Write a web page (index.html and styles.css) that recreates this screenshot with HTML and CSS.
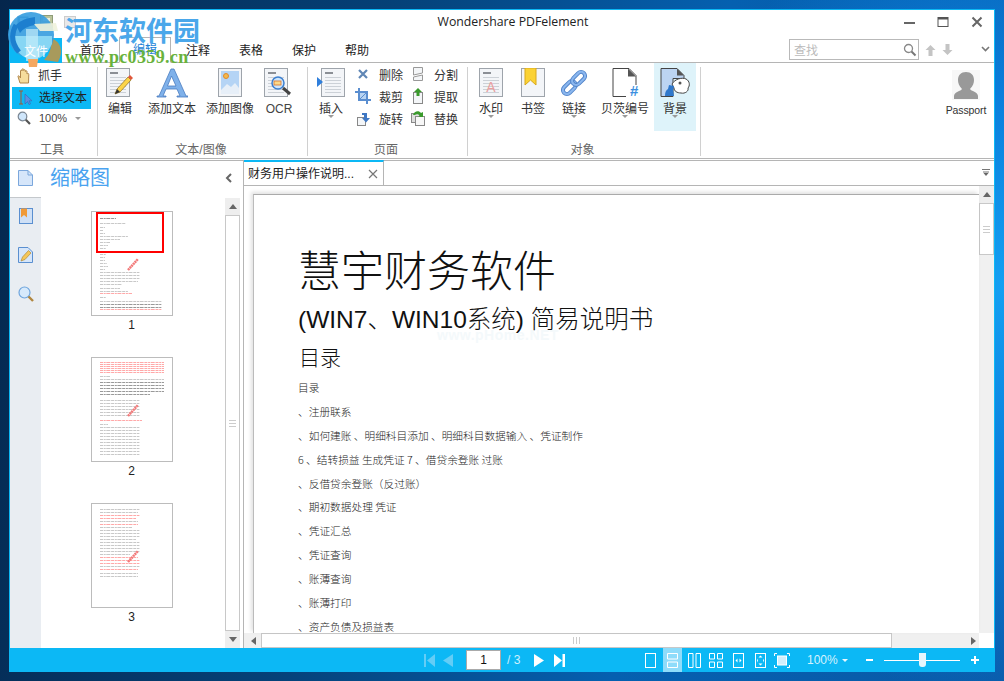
FILE: index.html
```html
<!DOCTYPE html>
<html lang="zh">
<head>
<meta charset="utf-8">
<title>Wondershare PDFelement</title>
<link rel="stylesheet" href="styles.css">
</head>
<body>
<svg class="defs" width="0" height="0">
  <defs>
    <symbol id="paper" viewBox="0 0 26 30">
      <rect x=".5" y=".5" width="23" height="28" fill="#f3f5f8" stroke="#9ea4ab"/>
      <rect x="4" y="4" width="8" height="2" fill="#8b8f95"/>
      <path d="M4 9.500h16M4 12.500h16M4 15.500h16M4 18.500h16M4 21.500h16M4 24.500h16" stroke="#ccd1d7"/>
    </symbol>
  </defs>
</svg>
<div class="window">
  <header class="titlebar">
    <div class="qat">
      <svg width="12" height="12" viewBox="0 0 12 12"><rect x="1" y="1" width="10" height="10" fill="#2d78c4" stroke="#1d5a9c"/><rect x="3" y="2" width="6" height="3" fill="#cfe6fb"/></svg>
      <svg width="13" height="13" viewBox="0 0 13 13"><rect x=".5" y=".5" width="12" height="12" fill="#b9c39a" stroke="#8e9c78"/><rect x="3" y="3" width="7" height="3" fill="#e8ecd8"/></svg>
      <svg width="12" height="12" viewBox="0 0 12 12"><rect x=".5" y=".5" width="11" height="11" fill="#e9e9e9" stroke="#ccc"/></svg>
    </div>
    <div class="app-title">Wondershare PDFelement</div>
    <div class="winctl">
      <svg width="12" height="12" viewBox="0 0 12 12"><path d="M1 7h11" stroke="#666" stroke-width="2"/></svg>
      <svg width="12" height="12" viewBox="0 0 12 12"><rect x="1" y="1.500" width="10" height="9" fill="none" stroke="#555"/><path d="M1 2.500h10" stroke="#555" stroke-width="2"/></svg>
      <svg width="12" height="12" viewBox="0 0 12 12"><path d="M1.500 1.500l9 9M10.500 1.500l-9 9" stroke="#666" stroke-width="2"/></svg>
    </div>
  </header>
  <nav class="tabsrow">
    <div class="file-tab"><span>文件</span></div>
    <div class="menu first">首页</div>
    <div class="menu active">编辑</div>
    <div class="menu">注释</div>
    <div class="menu">表格</div>
    <div class="menu">保护</div>
    <div class="menu">帮助</div>
    <div class="searchbox">
      <span>查找</span>
      <svg width="14" height="14" viewBox="0 0 14 14"><circle cx="5.500" cy="5.500" r="4" fill="#fff" stroke="#888" stroke-width="1.300"/><path d="M8.500 8.500l4 4" stroke="#777" stroke-width="2"/></svg>
    </div>
    <svg class="sarrow" width="11" height="12" viewBox="0 0 11 12"><path d="M5.500 1L10.500 6H7.500V12H3.500V6H.5z" fill="#c4c4c4"/></svg>
    <svg class="sarrow" width="11" height="12" viewBox="0 0 11 12"><path d="M5.500 11L10.500 6H7.500V0H3.500V6H.5z" fill="#c4c4c4"/></svg>
    <svg class="chev" width="9" height="6" viewBox="0 0 9 6"><path d="M1 1l3.500 3.500L8 1" fill="none" stroke="#777" stroke-width="1.600"/></svg>
  </nav>

  <section class="ribbon">
    <div class="group g-tools">
      <div class="group-body toolcol">
        <div class="tool">
          <svg width="15" height="16" viewBox="0 0 15 16"><path d="M3 15L1 8.500c0-1 1-1 1.500 0L3.500 10V3c0-1.200 1.500-1.200 1.500 0V1.500c0-1 1.700-1 1.700 0V2.500c0-1 1.700-1 1.700 0V3.500c0-1 1.600-1 1.600 0V6c1-1 2-.5 1.800.5L11.500 15z" fill="#f6dc9c" stroke="#b1864a"/></svg>
          <span>抓手</span>
        </div>
        <div class="tool selected">
          <svg width="16" height="16" viewBox="0 0 16 16"><path d="M2 1h4M2 14h4M4 1v13" stroke="#a5582f" fill="none"/><path d="M8 4v10l2.500-2.500 1.500 3 1.500-.7-1.500-3H15z" fill="#5a8fe0" stroke="#3566b5" stroke-width=".6"/></svg>
          <span>选择文本</span>
        </div>
        <div class="tool zoomtool">
          <svg width="14" height="14" viewBox="0 0 14 14"><circle cx="5.500" cy="5.500" r="4.300" fill="#cfe6fb" stroke="#7b8794" stroke-width="1.200"/><path d="M8.800 8.800l4.200 4.200" stroke="#555" stroke-width="2.200"/></svg>
          <span class="pct">100%</span>
          <i class="caret"></i>
        </div>
      </div>
      <div class="group-label">工具</div>
    </div>

    <div class="group g-text">
      <div class="group-body">
        <div class="big w44">
          <svg class="ico" width="32" height="30" viewBox="0 0 32 30"><use href="#paper" width="26" height="30" x="2"/><path d="M11 26l2-5L24 9l3 3-11 12z" fill="#fbd44a" stroke="#8a6a1c" stroke-width=".7"/><path d="M24 9l2-2 3 3-2 2z" fill="#e0563a"/><path d="M11 26l2-5 3 3z" fill="#333"/></svg>
          <span>编辑</span>
        </div>
        <div class="big w60">
          <svg class="ico" width="32" height="30" viewBox="0 0 32 30"><path d="M16 1h-1L3 28h-2v1h9v-1H7l3-7h11l3 7h-3v1h11v-1h-2L18 1zM11.500 18L15.500 8l4.500 10z" fill="#7fb1ea" stroke="#4a7cc0" stroke-width=".8"/></svg>
          <span>添加文本</span>
        </div>
        <div class="big w56">
          <svg class="ico" width="32" height="30" viewBox="0 0 32 30"><rect x="4.500" y=".5" width="23" height="28" fill="#f3f5f8" stroke="#9ea4ab"/><rect x="7" y="3" width="18" height="23" fill="#b5d4f5"/><circle cx="12" cy="8" r="2.500" fill="#f5b94d" stroke="#e08a2c"/><path d="M7 22l6-6 4 3 4-4 4 5v6H7z" fill="#e7eff8"/></svg>
          <span>添加图像</span>
        </div>
        <div class="big w42">
          <svg class="ico" width="32" height="30" viewBox="0 0 32 30"><use href="#paper" width="26" height="30" x="1"/><circle cx="15" cy="15" r="6" fill="#cfe6fb" stroke="#3c7fd0" stroke-width="1.500"/><rect x="11" y="13" width="7" height="4" fill="#fbd98a" stroke="#d8722c" stroke-width=".8"/><path d="M20 20l7 6" stroke="#444" stroke-width="3"/></svg>
          <span class="lat">OCR</span>
        </div>
      </div>
      <div class="group-label">文本/图像</div>
    </div>

    <div class="group g-page">
      <div class="group-body">
        <div class="big w46 has-caret">
          <svg class="ico" width="32" height="30" viewBox="0 0 32 30"><use href="#paper" width="26" height="30" x="6"/><path d="M2 9l6 5-6 5z" fill="#2f7fdc"/></svg>
          <span>插入</span>
          <i class="caret"></i>
        </div>
        <div class="smallgrid">
          <div class="small"><svg width="16" height="14" viewBox="0 0 16 14"><path d="M4 3l8 8M12 3l-8 8" stroke="#5f86b5" stroke-width="2.200"/></svg><span>删除</span></div>
          <div class="small"><svg width="16" height="14" viewBox="0 0 16 14"><path d="M3.500.5h9v5.500l-9 2zM3.500 10l9-2v5.500h-9z" fill="#f4f6f8" stroke="#999"/></svg><span>分割</span></div>
          <div class="small"><svg width="16" height="16" viewBox="0 0 16 16"><path d="M4 0v12h12M0 4h12v12" fill="none" stroke="#5a8ed0" stroke-width="2"/><rect x="5" y="5" width="6" height="6" fill="#b7d3f2"/><path d="M5 11l6-6" stroke="#5a8ed0"/></svg><span>裁剪</span></div>
          <div class="small"><svg width="16" height="16" viewBox="0 0 16 16"><rect x="3.500" y="4.500" width="9" height="11" fill="#f4f6f8" stroke="#888"/><path d="M8 0l4 4H9.500v4h-3V4H4z" fill="#3a9a2c"/></svg><span>提取</span></div>
          <div class="small"><svg width="16" height="15" viewBox="0 0 16 15"><rect x="2.500" y="6.500" width="8" height="8" fill="#f4f6f8" stroke="#888"/><path d="M7 2h5v5h3l-4 4.500L7 7h2V4H7z" fill="#3f78c4"/></svg><span>旋转</span></div>
          <div class="small"><svg width="16" height="16" viewBox="0 0 16 16"><rect x="1.500" y="3.500" width="8" height="9" fill="#ddd" stroke="#888"/><rect x="5.500" y="6.500" width="9" height="9" fill="#f7f7f7" stroke="#888"/><path d="M3 5c1-4 6-5 8-2l2-1v5H8l2-1c-1-2-4-2-5-1z" fill="#3a9a2c"/></svg><span>替换</span></div>
        </div>
      </div>
      <div class="group-label">页面</div>
    </div>

    <div class="group g-object">
      <div class="group-body">
        <div class="big w46 has-caret">
          <svg class="ico" width="32" height="30" viewBox="0 0 32 30"><use href="#paper" width="26" height="30" x="4"/><text class="wm" x="16" y="24">A</text></svg>
          <span>水印</span>
          <i class="caret"></i>
        </div>
        <div class="big w38">
          <svg class="ico" width="32" height="30" viewBox="0 0 32 30"><rect x="4.500" y=".5" width="23" height="28" fill="#f3f5f8" stroke="#9ea4ab"/><path d="M8 0h11v17l-5.500-5L8 17z" fill="#fbd234" stroke="#d8a81c"/></svg>
          <span>书签</span>
        </div>
        <div class="big w44 has-caret">
          <svg class="ico" width="32" height="30" viewBox="0 0 32 30"><g transform="rotate(-45 16 15)" fill="none"><rect x="2" y="11" width="15" height="8" rx="4" stroke="#4f82c8" stroke-width="4"/><rect x="2" y="11" width="15" height="8" rx="4" stroke="#8ab6ee" stroke-width="2.200"/><rect x="15" y="11" width="15" height="8" rx="4" stroke="#4f82c8" stroke-width="4"/><rect x="15" y="11" width="15" height="8" rx="4" stroke="#8ab6ee" stroke-width="2.200"/></g></svg>
          <span>链接</span>
          <i class="caret"></i>
        </div>
        <div class="big w58 has-caret">
          <svg class="ico" width="32" height="30" viewBox="0 0 32 30"><path d="M4 28.500V.5h16l7 7V17M4 28.500h13" fill="#fff" stroke="#444"/><path d="M19 .5l8 8h-8z" fill="#555"/><text class="hash" x="21" y="28">#</text></svg>
          <span>贝茨编号</span>
          <i class="caret"></i>
        </div>
        <div class="big w42 has-caret on">
          <svg class="ico" width="32" height="30" viewBox="0 0 32 30"><path d="M2 28.500V.5h16l7 7v3H14v18z" fill="#bcd4f2" stroke="#444"/><path d="M18 .5l7 7h-7z" fill="#555"/><path d="M13 16c3-5 10-7 14-5 4 2 4 7 2 9 1 3-3 6-7 5-4 0-7-2-7-5z" fill="#fff" stroke="#444"/><circle cx="21" cy="15" r="1.500" fill="#555"/><path d="M6 28c0-4 1-6 3-7l1-4 5 1-1 4 1 6z" fill="#2f78cc"/></svg>
          <span>背景</span>
          <i class="caret"></i>
        </div>
      </div>
      <div class="group-label">对象</div>
    </div>

    <div class="passport">
      <svg width="28" height="30" viewBox="0 0 28 30"><rect width="28" height="30" fill="#f7f7f7"/><path d="M2 29v-3c0-4 7-5 8-7-3-3-4-6-4-9 0-5 3-8 8-8s8 3 8 8c0 3-1 6-4 9 1 2 8 3 8 7v3z" fill="#999"/></svg>
      <span>Passport</span>
    </div>
  </section>

  <main class="workspace">
    <aside class="rail">
      <div class="rail-top">
        <svg width="15" height="16" viewBox="0 0 15 16"><path d="M.5.500h9.500l4.500 4.500v10.500H.5z" fill="#d6e6fa" stroke="#7ba7dc"/><path d="M10 .5v4.500h4.500" fill="none" stroke="#7ba7dc"/></svg>
      </div>
      <div class="rail-item">
        <svg width="14" height="16" viewBox="0 0 14 16"><rect x=".5" y=".5" width="13" height="15" fill="#cfe0f6" stroke="#5a8fd0"/><path d="M2 .5h6v9L5 7l-3 2.500z" fill="#f09a38"/></svg>
      </div>
      <div class="rail-item">
        <svg width="15" height="16" viewBox="0 0 15 16"><path d="M.5.500h9.500l4.500 4.500v10.500H.5z" fill="#d6e6fa" stroke="#5a8fd0"/><path d="M3 14l1.500-4 6-6.500 2.500 2.500-6 6.500z" fill="#f5c75a" stroke="#a57d2c" stroke-width=".6"/></svg>
      </div>
      <div class="rail-item">
        <svg width="16" height="16" viewBox="0 0 16 16"><circle cx="6.500" cy="6.500" r="5.500" fill="#d6e9fb" stroke="#6fa5dd" stroke-width="1.200"/><path d="M10.500 10.500l4.500 4.500" stroke="#b0863f" stroke-width="2.400"/></svg>
      </div>
    </aside>

    <section class="thumbs">
      <div class="thumbs-head">
        <h2>缩略图</h2>
        <svg width="7" height="10" viewBox="0 0 7 10"><path d="M6 1L2 5l4 4" fill="none" stroke="#666" stroke-width="2"/></svg>
      </div>
      <div class="thumbs-body">
        <div class="thumb-list">
          <figure class="thumb">
            <div class="sheet">
              <svg width="80" height="103" viewBox="0 0 80 103">
                <path class="ln-d" d="M8 6.500h16"/>
                <path class="ln" d="M8 11.500h26M8 15.500h5M8 18.500h3M8 21.500h5M8 24.500h28M8 27.500h20M8 30.500h10M8 33.500h8M8 36.500h6M8 39.500h6M8 42.500h6M8 45.500h5M8 48.500h5M8 51.500h7M8 54.500h8M8 57.500h5M8 60.500h40M8 63.500h40M8 66.500h40M8 69.500h38M8 72.500h22M8 76.500h20M8 79.500h28"/>
                <path class="ln-r" d="M8 81.500h32"/>
                <path class="ln" d="M8 85.500h6M8 89.500h62"/>
                <path class="ln-d" d="M8 92.500h62M8 95.500h62"/>
                <path class="ln-r" d="M8 97.500h62"/>
                <path class="stamp" d="M36 58L46 47"/>
              </svg>
              <div class="viewport"></div>
            </div>
            <figcaption>1</figcaption>
          </figure>
          <figure class="thumb">
            <div class="sheet">
              <svg width="80" height="103" viewBox="0 0 80 103">
                <path class="ln-r" d="M8 4.500h64M8 6.500h64M8 8.500h64M8 10.500h64M8 12.500h64M8 14.500h64"/>
                <path class="ln" d="M8 18.500h10M8 21.500h64"/>
                <path class="ln-d" d="M8 24.500h64M8 27.500h64M8 30.500h64M8 33.500h64M8 36.500h50"/>
                <path class="ln" d="M8 42.500h40M8 45.500h40M8 48.500h40M8 51.500h40M8 54.500h40M8 57.500h40"/>
                <path class="ln-r" d="M8 62.500h42"/>
                <path class="ln" d="M8 66.500h8M8 69.500h40M8 72.500h40M8 75.500h40M8 78.500h40M8 81.500h40M8 84.500h40M8 87.500h40M8 90.500h40M8 93.500h40M8 96.500h40"/>
                <path class="stamp" d="M36 58L46 47"/>
              </svg>
            </div>
            <figcaption>2</figcaption>
          </figure>
          <figure class="thumb">
            <div class="sheet">
              <svg width="80" height="103" viewBox="0 0 80 103">
                <path class="ln" d="M8 5.500h40M8 8.500h38"/>
                <path class="ln-r" d="M8 11.500h40M8 14.500h36"/>
                <path class="ln" d="M8 17.500h38"/>
                <path class="ln-r" d="M8 20.500h38"/>
                <path class="ln" d="M8 23.500h32M8 26.500h40M8 29.500h40M8 32.500h40M8 35.500h36M8 38.500h40M8 41.500h40M8 44.500h40M8 47.500h40M8 50.500h30"/>
                <path class="ln-r" d="M8 53.500h38M8 56.500h40M8 59.500h40"/>
                <path class="ln" d="M8 62.500h40"/>
                <path class="ln-r" d="M8 65.500h38"/>
                <path class="ln" d="M8 69.500h38M8 72.500h38"/>
                <path class="stamp" d="M36 58L46 47"/>
              </svg>
            </div>
            <figcaption>3</figcaption>
          </figure>
        </div>
        <div class="vscroll side">
          <div class="sbtn"><i class="up"></i></div>
          <div class="sthumb long"><b></b></div>
          <div class="sbtn"><i class="down"></i></div>
        </div>
      </div>
    </section>

    <section class="docarea">
      <div class="doctabs">
        <div class="doctab">
          <span>财务用户操作说明...</span>
          <svg width="10" height="10" viewBox="0 0 10 10"><path d="M1 1l8 8M9 1l-8 8" stroke="#777" stroke-width="1.200"/></svg>
        </div>
        <svg class="tabmenu" width="8" height="7" viewBox="0 0 8 7"><path d="M0 .5h8M1 3h6" stroke="#777"/><path d="M1.500 4h5L4 7z" fill="#666"/></svg>
      </div>
      <div class="docmain">
        <div class="docview">
          <article class="page">
            <h1>慧宇财务软件</h1>
            <h2 class="sub">(WIN7、WIN10系统) 简易说明书</h2>
            <h3>目录</h3>
            <ul class="toc">
              <li>目录</li>
              <li>、注册联系</li>
              <li>、如何建账 、明细科目添加 、明细科目数据输入 、凭证制作</li>
              <li>6 、结转损益 生成凭证 7 、借贷余登账 过账</li>
              <li>、反借贷余登账（反过账）</li>
              <li>、期初数据处理 凭证</li>
              <li>、凭证汇总</li>
              <li>、凭证查询</li>
              <li>、账薄查询</li>
              <li>、账薄打印</li>
              <li>、资产负债及损益表</li>
            </ul>
            <div class="page-wm">www.pHome.NET</div>
          </article>
          <div class="vscroll main">
            <div class="sbtn"><i class="up"></i></div>
            <div class="sthumb short"><b></b></div>
          </div>
        </div>
        <div class="hscroll">
          <div class="hbtn"><i class="left"></i></div>
          <div class="hthumb"><b></b></div>
          <div class="hrest"><i class="right"></i></div>
          <div class="corner"></div>
        </div>
      </div>
    </section>
  </main>

  <footer class="status">
    <div class="nav">
      <svg width="11" height="13" viewBox="0 0 11 13"><path d="M0 0h2v13H0zM11 0v13L3 6.500z" fill="#63cdf6"/></svg>
      <svg width="10" height="13" viewBox="0 0 10 13"><path d="M10 0v13L0 6.500z" fill="#63cdf6"/></svg>
      <div class="pageinput">1</div>
      <span class="total">/ 3</span>
      <svg width="10" height="13" viewBox="0 0 10 13"><path d="M0 0v13l10-6.500z" fill="#fff"/></svg>
      <svg width="11" height="13" viewBox="0 0 11 13"><path d="M0 0v13l8-6.500zM8.500 0h2.500v13H8.500z" fill="#fff"/></svg>
    </div>
    <div class="views">
      <div class="view"><svg width="11" height="15" viewBox="0 0 11 15"><rect x=".5" y=".5" width="10" height="14" fill="none" stroke="#fff"/></svg></div>
      <div class="view cur"><svg width="11" height="15" viewBox="0 0 11 15"><path d="M.5.500h10v5.500H.5zM.5 9h10v5.500H.5z" fill="none" stroke="#fff"/></svg></div>
      <div class="view"><svg width="13" height="15" viewBox="0 0 13 15"><path d="M.5.500h4.500v14H.5zM8 .5h4.500v14H8z" fill="none" stroke="#fff"/></svg></div>
      <div class="view"><svg width="14" height="15" viewBox="0 0 14 15"><path d="M.5.500h5v5.500h-5zM8.500.5h5v5.500h-5zM.5 9h5v5.500h-5zM8.500 9h5v5.500h-5z" fill="none" stroke="#fff"/></svg></div>
      <div class="view"><svg width="11" height="15" viewBox="0 0 11 15"><rect x=".5" y=".5" width="10" height="14" fill="none" stroke="#fff"/><path d="M4.500 5.500L2.500 7.500l2 2zM6.500 5.500l2 2-2 2z" fill="#fff"/></svg></div>
      <div class="view"><svg width="11" height="15" viewBox="0 0 11 15"><rect x=".5" y=".5" width="10" height="14" fill="none" stroke="#fff"/><path d="M5.500 2.500L3.500 4.500h4zM5.500 12.500l2-2h-4zM3 5.500L2 7.500l1 2zM8 5.500l1 2-1 2z" fill="#fff"/></svg></div>
      <div class="view"><svg width="16" height="15" viewBox="0 0 16 15"><path d="M.5 3V.5H3M13 .5h2.500V3M.5 12v2.500H3M13 14.500h2.500V12" fill="none" stroke="#fff"/><rect x="3.500" y="3" width="9" height="9" fill="#cfeefc" stroke="#fff"/></svg></div>
    </div>
    <div class="zoompct">100%<i class="wcaret"></i></div>
    <svg class="zm minus" width="7" height="2" viewBox="0 0 7 2"><rect width="7" height="2" fill="#fff"/></svg>
    <div class="slider"><div class="knob"></div></div>
    <svg class="zm plus" width="8" height="8" viewBox="0 0 8 8"><path d="M3 0h2v3h3v2H5v3H3V5H0V3h3z" fill="#fff"/></svg>
  </footer>

  <div class="logo">
    <svg width="62" height="60" viewBox="0 0 62 60">
      <path d="M45 26Q62 34 53 51L39 49Q49 39 45 26z" fill="#a89a5c"/>
      <circle cx="26" cy="24" r="23" fill="#3a9ee0" opacity=".92"/>
      <path d="M7 29Q13 47 28 49Q41 47 47 33L47 25L7 25z" fill="#90dcf6" opacity=".9"/>
      <path d="M14 41Q3 28 11 14" fill="none" stroke="#1d7fcf" stroke-width="5"/>
      <path d="M11 14Q18 7 30 6L30 14Q20 15 15 22z" fill="#1d7fcf"/>
      <path d="M29 13L51 12L53 20L35 20z" fill="#eef2dc" opacity=".9"/>
      <path d="M21 18h12v32h-12z" fill="#c4ecfa" opacity=".7"/>
      <path d="M23 48h10l-1 8h-8z" fill="#f5a860"/>
    </svg>
    <div class="logo-cn">河东软件园</div>
    <div class="logo-url">www.pc0359.cn</div>
  </div>
</div>
</body>
</html>
```

FILE: styles.css
```css
* { box-sizing: border-box; }
html, body { height: 100%; }
body {
  margin: 0;
  padding: 9px;
  overflow: hidden;
  font-family: "Liberation Sans", "Noto Sans CJK SC", sans-serif;
  font-size: 12px;
  color: #333;
  background:
    radial-gradient(ellipse 320px 420px at 100% 42%, #14a0f2 0, #0a7fdc 45%, rgba(10,110,200,0) 100%),
    linear-gradient(100deg, #05264c 0, #054178 35%, #0560b0 65%, #0a5aa8 100%);
}
.defs { position: absolute; }
.window {
  position: relative;
  width: 986px;
  height: 663px;
  display: flex;
  flex-direction: column;
  background: #fff;
  border: 1px solid #0cb8f5;
  border-bottom: 0;
}

/* title bar */
.titlebar { height: 28px; flex: none; display: flex; align-items: center; position: relative; padding-bottom: 5px; }
.qat { display: flex; gap: 11px; padding-left: 7px; width: 338px; align-items: center; }
.app-title { width: 330px; text-align: center; font: 12.300px/16px "Open Sans", sans-serif; color: #222; }
.winctl { margin-left: auto; display: flex; gap: 22px; padding-right: 11px; }

/* menu tabs */
.tabsrow { height: 25px; flex: none; display: flex; align-items: stretch; border-bottom: 1px solid #b5b5b5; }
.file-tab { width: 52px; margin-bottom: -1px; background: #0cb8f5; color: #fff; text-align: center; line-height: 26px; font-size: 12px; padding-top: 1px; }
.file-tab span { position: relative; z-index: 2; }
.menu { width: 52px; margin-right: 1px; text-align: center; line-height: 25px; padding-top: 1px; color: #222; font-size: 12px; }
.menu.first { margin-left: 4px; }
.menu.active { color: #1c7fd6; border: 1px solid #b5b5b5; border-bottom-color: #fff; line-height: 24px; padding-top: 0; background: #fff; margin-top: -1px; height: 26px; }
.searchbox { width: 130px; height: 21px; margin: 1px 6px 0 405px; border: 1px solid #b9b9b9; display: flex; align-items: center; justify-content: space-between; padding: 0 1px 0 4px; color: #bbb; font-size: 12px; }
.sarrow { margin: 6px 6px 0 0; }
.chev { margin: 8px 0 0 22px; }

/* ribbon */
.ribbon { height: 96px; flex: none; display: flex; border-bottom: 1px solid #b5b5b5; position: relative; }
.group { display: flex; flex-direction: column; position: relative; flex: none; }
.group::after { content: ""; position: absolute; right: 0; top: 4px; bottom: 2px; width: 1px; background: #d0d0d0; }
.group-body { flex: 1; display: flex; min-height: 0; }
.group-label { height: 20px; text-align: center; line-height: 16px; padding: 4px 4px 0 0; color: #666; font-size: 12px; }
.g-tools { width: 88px; }
.g-text { width: 210px; }
.g-page { width: 160px; }
.g-object { width: 233px; }
.toolcol { flex-direction: column; padding: 2px 0 0 2px; }
.tool { height: 22px; display: flex; align-items: center; gap: 6px; padding-left: 5px; width: 79px; color: #333; flex: none; }
.tool.selected { background: #0cb8f5; }
.tool.selected span { color: #222; }
.tool svg { flex: none; }
.tool span { line-height: 16px; }
.zoomtool { margin-top: -2px; gap: 8px; }
.pct { font-size: 11px; color: #444; }
.big { display: flex; flex-direction: column; align-items: center; padding-top: 5px; height: 68px; color: #333; flex: none; }
.big .ico { flex: none; }
.big span { display: block; line-height: 16px; margin-top: 3px; white-space: nowrap; }
.big .lat { font-size: 12px; color: #444; }
.w38 { width: 38px; } .w42 { width: 42px; } .w44 { width: 44px; } .w46 { width: 46px; }
.w56 { width: 56px; } .w58 { width: 58px; } .w60 { width: 60px; }
.big.on { background: #def3fa; }
.caret { display: block; width: 0; height: 0; border: 3px solid transparent; border-top: 3px solid #999; border-bottom: 0; }
.big .caret { margin-top: -2px; }
.smallgrid { display: grid; grid-template-columns: 55px 52px; grid-auto-rows: 22px; padding: 0 0 0 1px; }
.small { display: flex; align-items: center; gap: 8px; white-space: nowrap; height: 22px; }
.small svg { flex: none; width: 16px; }
.passport { position: absolute; right: 6px; top: 7px; display: flex; flex-direction: column; align-items: center; width: 44px; }
.passport span { font-size: 10.500px; line-height: 14px; margin-top: 3px; letter-spacing: -.1px; color: #333; }

/* workspace */
.workspace { flex: 1; min-height: 0; display: flex; padding-top: 1px; }
.rail { width: 31px; flex: none; background: #e9edf2; display: flex; flex-direction: column; }
.rail-top { height: 38px; padding-bottom: 3px; background: #fff; border-top: 1px solid #b5b5b5; border-bottom: 1px solid #c4c8cc; display: flex; align-items: center; justify-content: center; }
.rail-item { height: 39px; display: flex; align-items: center; justify-content: center; }
.rail-item:nth-child(2) { margin-top: -2px; }
.thumbs { width: 202px; flex: none; display: flex; flex-direction: column; border-top: 1px solid #b5b5b5; }
.thumbs-head { height: 34px; padding: 0 11px 0 9px; display: flex; align-items: center; justify-content: space-between; }
.thumbs-head h2 { margin: 0; font-size: 20px; font-weight: 400; line-height: 28px; color: #4aa3f0; }
.thumbs-body { flex: 1; min-height: 0; display: flex; padding-top: 3px; }
.thumb-list { flex: 1; padding-top: 13px; display: flex; flex-direction: column; align-items: center; gap: 22px; }
.thumb { margin: 0 2px 0 0; }
.sheet { position: relative; width: 82px; height: 105px; border: 1px solid #bcbcbc; background: #fff; }
.sheet svg { display: block; filter: blur(.4px); }
.thumb figcaption { text-align: center; line-height: 16px; margin: 1px 1px 0 0; height: 18px; color: #222; font-size: 12px; }
.viewport { position: absolute; left: 4px; top: 0; width: 68px; height: 41px; border: 2px solid #f00; }
.ln, .ln-d, .ln-r { fill: none; stroke-width: 1; stroke-dasharray: 3 .7 2 .6 4 .8; }
.ln { stroke: #c8c8c8; }
.ln-d { stroke: #999; }
.ln-r { stroke: #ffa8a8; }
.stamp { stroke: #f27a7a; stroke-width: 2.500; stroke-dasharray: 2 .5; fill: none; }
.vscroll { width: 15px; flex: none; display: flex; flex-direction: column; }
.vscroll.side { margin: -3px 3px 0 0; padding-top: 3px; }
.sbtn { height: 17px; flex: none; background: #eee; display: flex; align-items: center; justify-content: center; }
.up { width: 0; height: 0; border: 4.500px solid transparent; border-top: 0; border-bottom: 5px solid #666; }
.down { width: 0; height: 0; border: 4.500px solid transparent; border-bottom: 0; border-top: 5px solid #666; }
.sthumb { border: 1px solid #c8c8c8; background: #fff; display: flex; align-items: center; justify-content: center; }
.sthumb b { display: block; width: 7px; height: 7px; border-top: 1px solid #ccc; border-bottom: 1px solid #ccc; background: linear-gradient(#ccc,#ccc) center/100% 1px no-repeat; }
.long { flex: 1; }
.short { height: 52px; }

.docarea { flex: 1; min-width: 0; display: flex; flex-direction: column; border-left: 1px solid #b5b5b5; }
.doctabs { height: 26px; flex: none; display: flex; border-bottom: 1px solid #b5b5b5; border-top: 1px solid #b5b5b5; position: relative; }
.doctab { width: 140px; height: 25px; margin-top: -1px; display: flex; align-items: center; justify-content: space-between; border-top: 2px solid #0cb8f5; border-right: 1px solid #b5b5b5; background: #fff; padding: 1px 5px 0 4px; color: #222; }
.doctab span { line-height: 16px; }
.tabmenu { position: absolute; right: 4px; top: 8px; }
.docmain { flex: 1; min-height: 0; display: flex; flex-direction: column; }
.docview { flex: 1; min-height: 0; display: flex; }
.vscroll.main { background: #f0f0f0; }
.page {
  flex: 1;
  position: relative;
  overflow: hidden;
  margin: 8px 0 0 9px;
  padding: 44px 0 0 44px;
  background: #fff;
  border-top: 1px solid #aaa;
  border-left: 1px solid #bbb;
  box-shadow: -2px -2px 4px rgba(0,0,0,.12);
  font-family: "Noto Sans CJK SC", sans-serif;
  color: #111;
}
.page h1 { margin: 0; font-size: 43px; line-height: 58px; font-weight: 300; white-space: nowrap; }
.page .sub { margin: 5px 0 0 0; font-size: 24.500px; line-height: 36px; font-weight: 300; font-family: "Liberation Sans", "Noto Sans CJK SC", sans-serif; white-space: nowrap; }
.page h3 { margin: 3px 0 0 1px; font-size: 21px; line-height: 30px; font-weight: 300; }
.toc { list-style: none; margin: 11px 0 0 0; padding: 0; font-size: 10.700px; font-weight: 300; color: #222; }
.toc li { height: 23.900px; line-height: 12px; white-space: nowrap; }
.page-wm { position: absolute; left: 183px; top: 132px; font: bold 14px/16px "Liberation Sans", sans-serif; color: #f4f9fb; letter-spacing: .5px; }
.hscroll { height: 15px; flex: none; display: flex; background: #f0f0f0; }
.hbtn { width: 16px; flex: none; margin-left: 1px; background: #f0f0f0; display: flex; align-items: center; justify-content: center; }
.left { width: 0; height: 0; border: 4.500px solid transparent; border-left: 0; border-right: 5px solid #666; }
.right { display: block; width: 0; height: 0; border: 4.500px solid transparent; border-right: 0; border-left: 5px solid #666; }
.hthumb { width: 631px; flex: none; background: #fff; border: 1px solid #c8c8c8; display: flex; align-items: center; justify-content: center; }
.hthumb b { display: block; width: 7px; height: 7px; border-left: 1px solid #ccc; border-right: 1px solid #ccc; background: linear-gradient(#ccc,#ccc) center/1px 100% no-repeat; }
.hrest { flex: 1; display: flex; align-items: center; justify-content: flex-end; padding-right: 3px; }
.corner { width: 15px; flex: none; background: #fff; }

/* status bar */
.status { height: 24px; flex: none; background: #0cb8f5; display: flex; align-items: center; color: #fff; padding-left: 414px; }
.nav { display: flex; align-items: center; }
.nav svg:nth-child(1) { margin-right: 8px; }
.nav svg:nth-child(2) { margin-right: 13px; }
.pageinput { width: 35px; height: 20px; background: #fff; border: 1px solid #aaa; color: #111; text-align: center; line-height: 18px; margin-right: 6px; }
.total { width: 16px; font-size: 12px; color: #cdf0fd; margin-right: 11px; white-space: nowrap; }
.nav svg:nth-child(5) { margin-right: 10px; }
.views { display: flex; margin-left: 74px; align-items: center; }
.view { width: 22px; height: 24px; display: flex; align-items: center; justify-content: center; }
.view.cur { background: #8edcfa; margin: 0 1.500px; width: 19px; }
.zoompct { margin-left: 14px; font-size: 12px; color: #d6f2fd; width: 59px; display: flex; align-items: center; white-space: nowrap; }
.wcaret { display: block; margin: 1px 0 0 4px; width: 0; height: 0; border: 3px solid transparent; border-top: 3px solid #e8f8ff; border-bottom: 0; }
.zm { flex: none; }
.slider { position: relative; width: 76px; height: 1px; background: #fff; margin: 0 11px; }
.knob { position: absolute; left: 35px; top: -7px; width: 7px; height: 14px; background: #e6f6fd; border-radius: 0 0 3px 3px; }

/* watermark logo */
.logo { position: absolute; left: -5px; top: 0; width: 210px; height: 62px; pointer-events: none; z-index: 1; }
.logo svg { position: absolute; left: 0; top: 1px; }
.logo-cn { position: absolute; left: 60px; top: 2px; font: 700 27px/36px "Noto Sans CJK SC", sans-serif; color: #4aa7ea; white-space: nowrap; }
.logo-url { position: absolute; left: 60px; top: 37px; font: 700 18px/20px "Liberation Serif", serif; color: #69b23c; letter-spacing: .35px; white-space: nowrap; }
.wm { font: 14px "Liberation Sans", sans-serif; fill: #eaa0a0; text-anchor: middle; }
.hash { font: 700 15px "Liberation Sans", sans-serif; fill: #3b8fe0; }
```
